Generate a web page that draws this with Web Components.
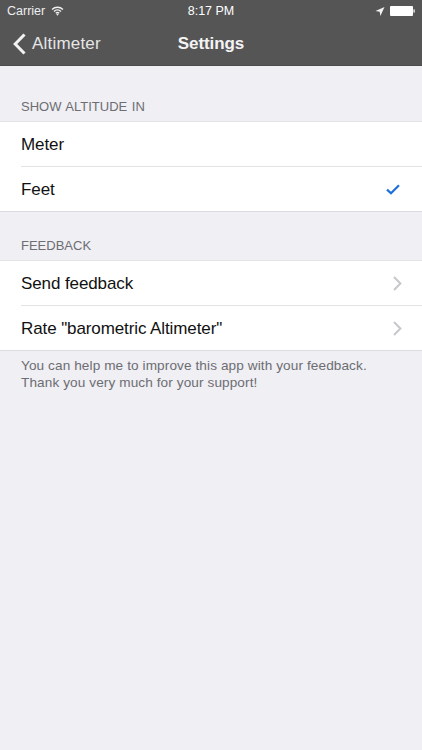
<!DOCTYPE html>
<html>
<head>
<meta charset="utf-8">
<title>Settings</title>
<style>
  html, body { margin: 0; height: 100%; background: #efeff4; }
  body { font-family: "Liberation Sans", Arial, sans-serif; }
</style>
</head>
<body>
<settings-nav back="Altimeter" title="Settings"></settings-nav>
<settings-section header="SHOW ALTITUDE IN" style="padding-top:33px">
  <settings-row>Meter</settings-row>
  <settings-row accessory="check" last>Feet</settings-row>
</settings-section>
<settings-section header="FEEDBACK" style="padding-top:20px">
  <settings-row accessory="chevron">Send feedback</settings-row>
  <settings-row accessory="chevron" last>Rate "barometric Altimeter"</settings-row>
  <span slot="footer">You can help me to improve this app with your feedback.<br>Thank you very much for your support!</span>
</settings-section>

<script>
class SettingsNav extends HTMLElement {
  constructor() {
    super();
    const shadow = this.attachShadow({ mode: 'open' });
    const back = this.getAttribute('back');
    const title = this.getAttribute('title');
    this.removeAttribute('title');
    shadow.innerHTML = `
      <style>
        :host {
          display: block;
          height: 66px;
          box-sizing: border-box;
          background: #555556;
          border-bottom: 1px solid #4b4b4c;
          color: #fff;
        }
        .status {
          display: grid;
          grid-template-columns: 1fr auto 1fr;
          align-items: center;
          height: 22px;
          padding: 0 7px;
          font-size: 12.5px;
        }
        .left { display: flex; align-items: center; gap: 6px; color: #eee; }
        .right { display: flex; align-items: center; justify-content: flex-end; gap: 5px; }
        .bar {
          display: grid;
          grid-template-columns: 1fr auto 1fr;
          align-items: center;
          height: 43px;
        }
        .back { display: flex; align-items: center; gap: 6px; padding-left: 13px; font-size: 17px; color: #e6e6e6; letter-spacing: .2px; }
        .title { font-size: 17px; font-weight: 700; color: #f4f4f4; letter-spacing: -.1px; }
        svg { display: block; }
      </style>
      <div class="status">
        <div class="left">
          <span>Carrier</span>
          <svg width="13" height="10" viewBox="0 0 14 11" fill="none" stroke="#f2f2f2" stroke-width="1.5">
            <path d="M1 3.8a8.6 8.6 0 0 1 12 0"/>
            <path d="M3.1 6a5.6 5.6 0 0 1 7.8 0"/>
            <path d="M5.1 8a2.8 2.8 0 0 1 3.8 0"/>
            <path d="M7 10.6 5.7 9.1a2 2 0 0 1 2.6 0z" fill="#f2f2f2" stroke="none"/>
          </svg>
        </div>
        <div class="time">8:17 PM</div>
        <div class="right">
          <svg width="10" height="9" viewBox="0 0 9 9"><path d="M9 0 0 4.1l4.2.6.7 4.3z" fill="#f2f2f2"/></svg>
          <svg width="25" height="10" viewBox="0 0 25 10">
            <rect x="0" y="0" width="23" height="10" rx="1" fill="#fff"/>
            <rect x="23.4" y="3.4" width="1.4" height="3.2" fill="#e8e8e8"/>
          </svg>
        </div>
      </div>
      <div class="bar">
        <div class="back">
          <svg width="13" height="22" viewBox="0 0 13 22" fill="none" stroke="#f2f2f2" stroke-width="3">
            <path d="M11.5 1.5 2.2 11l9.3 9.5"/>
          </svg>
          <span>${back}</span>
        </div>
        <div class="title">${title}</div>
        <div></div>
      </div>
    `;
  }
}

class SettingsSection extends HTMLElement {
  constructor() {
    super();
    const shadow = this.attachShadow({ mode: 'open' });
    shadow.innerHTML = `
      <style>
        :host { display: block; }
        .header {
          height: 22px;
          padding-left: 21px;
          font-size: 13px;
          line-height: 16px;
          word-spacing: 1px;
          color: #6d6d72;
        }
        .group {
          background: #fff;
          border-top: 1px solid #e3e3e6;
          border-bottom: 1px solid #dcdce0;
        }
        .footer {
          padding: 6px 21px 0;
          font-size: 13.6px;
          line-height: 17px;
          letter-spacing: .1px;
          color: #6d6d72;
        }
      </style>
      <div class="header">${this.getAttribute('header')}</div>
      <div class="group"><slot></slot></div>
      <div class="footer"><slot name="footer"></slot></div>
    `;
  }
}

const accessories = {
  check: `<svg width="14" height="11" viewBox="0 0 14 11" fill="none" stroke="#1f6fd8" stroke-width="2.2"><path d="M1 5.6 5 9.2 13 1.2"/></svg>`,
  chevron: `<svg width="9" height="15" viewBox="0 0 9 15" fill="none" stroke="#c7c7cc" stroke-width="2"><path d="M1 1l6.4 6.5L1 14"/></svg>`,
};

class SettingsRow extends HTMLElement {
  constructor() {
    super();
    const shadow = this.attachShadow({ mode: 'open' });
    const accessory = accessories[this.getAttribute('accessory')] || '';
    shadow.innerHTML = `
      <style>
        :host { display: block; padding-left: 21px; }
        .row {
          display: flex;
          align-items: center;
          justify-content: space-between;
          height: 44px;
          padding-right: 21px;
          border-bottom: 1px solid #e4e4e7;
          font-size: 17px;
          letter-spacing: -.1px;
          color: #111;
        }
        .row span { padding-top: 2px; }
        :host([last]) .row { border-bottom: 0; }
        :host([accessory="check"]) .row { padding-right: 22px; }
        :host([accessory="chevron"]) .row { padding-right: 20px; }
      </style>
      <div class="row"><span><slot></slot></span>${accessory}</div>
    `;
  }
}

customElements.define('settings-nav', SettingsNav);
customElements.define('settings-section', SettingsSection);
customElements.define('settings-row', SettingsRow);
</script>
</body>
</html>
